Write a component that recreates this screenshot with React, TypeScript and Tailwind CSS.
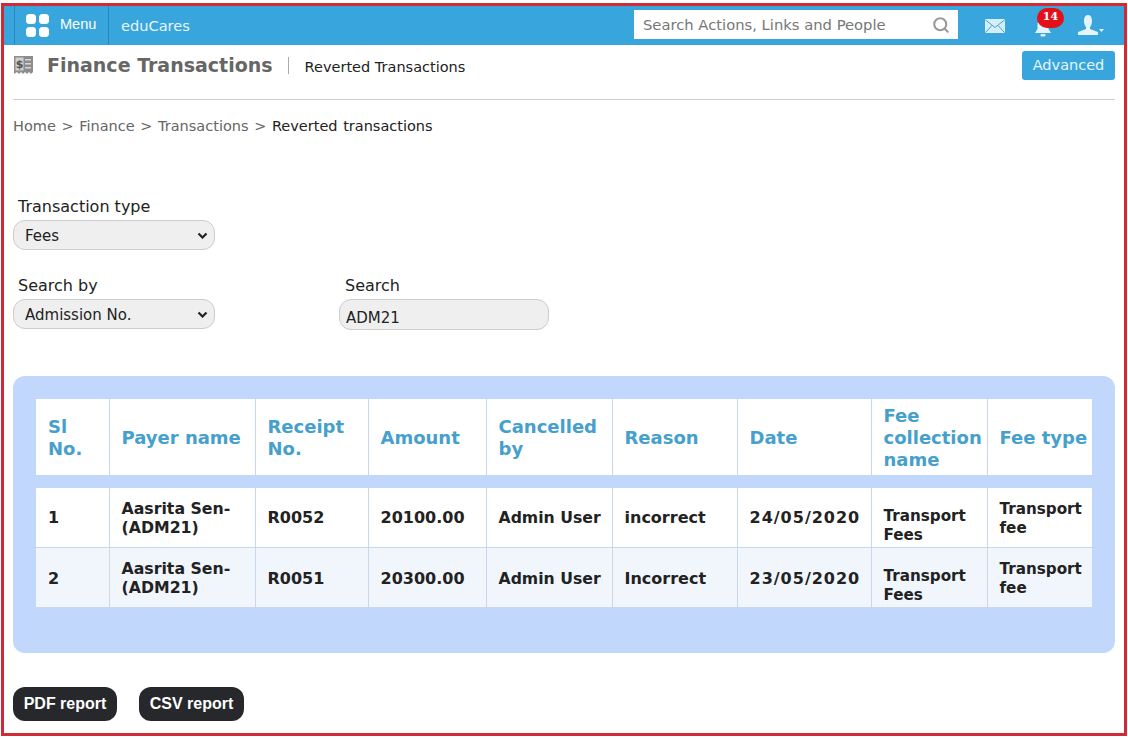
import { Search } from "lucide-react";

const FONT = "font-['DejaVu_Sans','Verdana',sans-serif]";

const rows = [
  { sl: "1", receipt: "R0052", amount: "20100.00", reason: "incorrect", date: "24/05/2020", bg: "bg-white", pad: "pt-0", padFee: "pt-[16px]", padType: "pt-[2px]" },
  { sl: "2", receipt: "R0051", amount: "20300.00", reason: "Incorrect", date: "23/05/2020", bg: "bg-[#f1f6fd]", pad: "pt-[2px]", padFee: "pt-[18px]", padType: "pt-[4px]" },
];

const headers = [
  { label: "Sl No.", width: "w-[73px]" },
  { label: "Payer name", width: "w-[146px]" },
  { label: "Receipt No.", width: "w-[113px]" },
  { label: "Amount", width: "w-[118px]" },
  { label: "Cancelled by", width: "w-[126px]" },
  { label: "Reason", width: "w-[125px]" },
  { label: "Date", width: "w-[134px]" },
  { label: "Fee collection name", width: "w-[116px]" },
  { label: "Fee type", width: "w-[105px] whitespace-nowrap" },
];

const thClass = "h-[76px] bg-white border-r border-[#c9d8e8] last:border-r-0 pl-3 pr-1 pt-[2px] text-left align-middle text-[18px] leading-[22px] font-bold text-[#46a0cc]";
const tdClass = "h-[59.5px] border-r border-b border-[#c9d8e8] last:border-r-0 pl-3 pr-1 align-middle leading-[19px] font-bold text-[#222]";

function Chevron() {
  return (
    <svg className="pointer-events-none absolute right-[7px] top-[12px]" width="11" height="7" viewBox="0 0 11 7" fill="none" aria-hidden>
      <path d="M1.5 1.5 L5.5 5.5 L9.5 1.5" stroke="#222" strokeWidth="2.2" />
    </svg>
  );
}

function TopBar() {
  return (
    <header className="flex h-[39px] items-center bg-[#38a5dc]">
      <div className="ml-[10px] flex h-full w-[95px] items-center border-x border-[#2a86b8] pl-[11px]">
        <svg width="23" height="23" viewBox="0 0 23 23" fill="#fff" aria-hidden>
          <rect x="0" y="0" width="10" height="10" rx="3.5" />
          <rect x="13" y="0" width="10" height="10" rx="3.5" />
          <rect x="0" y="13" width="10" height="10" rx="3.5" />
          <rect x="13" y="13" width="10" height="10" rx="3.5" />
        </svg>
        <span className="ml-[11px] -mt-[2px] font-['Liberation_Sans',Arial,sans-serif] text-[14.5px] text-white">Menu</span>
      </div>
      <span className="ml-[12px] text-[14.6px] text-[#e6f6ff]">eduCares</span>
      <div className="ml-auto mt-[4px] flex h-[29px] w-[324px] items-center justify-between self-start bg-white pl-[9px] pr-[8px]">
        <span className="mt-px text-[14.75px] text-[#777]">Search Actions, Links and People</span>
        <Search size={18} strokeWidth={2.75} className="text-[#999]" />
      </div>
      <svg className="ml-[27px]" width="20" height="14" viewBox="0 0 20 14" aria-hidden>
        <rect width="20" height="14" rx="1" fill="#d6eefa" />
        <path d="M0.5 1 L10 8.5 L19.5 1 M0.5 13.5 L7 6.5 M19.5 13.5 L13 6.5" fill="none" stroke="#38a5dc" strokeWidth="1" />
      </svg>
      <div className="relative ml-[29px] h-[24px] w-[30px]">
        <svg className="absolute left-0 top-[5px]" width="18" height="19" viewBox="0 0 18 19" fill="#e3f4fc" aria-hidden>
          <path d="M9 0 C5 0 3.5 3 3.5 6 V10 L1 14 H17 L14.5 10 V6 C14.5 3 13 0 9 0 Z" />
          <rect x="6.5" y="15" width="5" height="2.5" rx="1" />
        </svg>
        <span className="absolute left-[3px] -top-[6px] flex h-[20px] w-[27px] items-center justify-center rounded-full bg-[#e3101a] font-['DejaVu_Serif',serif] text-[11px] font-bold text-white">14</span>
      </div>
      <svg className="ml-[13px] mr-[20px]" width="27" height="21" viewBox="0 0 27 21" fill="#e3f4fc" aria-hidden>
        <path d="M11 0 C8 0 7 3 7 6 C7 9 8 11 9 12 V14 L1 17 V20 H21 V17 L13 14 V12 C14 11 15 9 15 6 C15 3 14 0 11 0 Z" />
        <path d="M22 14 H27 L24.5 17 Z" />
      </svg>
    </header>
  );
}

function TitleBar() {
  return (
    <div className="flex h-[55px] items-start border-b border-[#ccc] pt-[6px]">
      <svg className="ml-px mt-[5px]" width="19" height="18" viewBox="0 0 19 18" aria-hidden>
        <path d="M0 0 H19 V16 L17 18 L15 16 L13 18 L11 16 L9 18 L7 16 L5 18 L3 16 L0 18 Z" fill="#8d8d8d" />
        <rect x="1.5" y="1.5" width="8" height="13" fill="#cfcfcf" />
        <text x="5.5" y="12" textAnchor="middle" fontSize="11" fontWeight="700" fill="#555">$</text>
        <rect x="11" y="3" width="6" height="1.5" fill="#d5d5d5" />
        <rect x="11" y="7" width="6" height="1.5" fill="#d5d5d5" />
        <rect x="11" y="11" width="6" height="1.5" fill="#d5d5d5" />
      </svg>
      <h1 className="ml-[14px] text-[19px] leading-[28px] font-bold text-[#666]">Finance Transactions</h1>
      <span className="ml-[15px] mt-[6px] h-[17px] w-px bg-[#aaa]" />
      <span className="ml-[16px] mt-[6px] text-[14.5px] leading-[20px] text-[#222]">Reverted Transactions</span>
      <button className="ml-auto h-[29px] w-[93px] rounded-[3px] bg-[#38a5dc] text-[14.5px] text-[#e6f6ff]">Advanced</button>
    </div>
  );
}

function Field({ label, children, labelClass }: { label: string; children: React.ReactNode; labelClass?: string }) {
  return (
    <label className="block">
      <span className={`block h-[20px] pt-px text-[16px] leading-[20px] text-[#222] ${labelClass ?? "pl-[5px]"}`}>{label}</span>
      {children}
    </label>
  );
}

const selectClass = "block h-[30px] w-[202px] appearance-none rounded-[12px] border border-[#ccc] bg-[#efefef] pl-[11px] pt-[2px] text-[15px] text-[#222]";

function Filters() {
  return (
    <div className="mt-[60px]">
      <Field label="Transaction type">
        <div className="relative mt-[4px] w-[202px]">
          <select className={selectClass} defaultValue="Fees">
            <option>Fees</option>
          </select>
          <Chevron />
        </div>
      </Field>
      <div className="mt-[25px] flex gap-[124px]">
        <Field label="Search by">
          <div className="relative mt-[4px] w-[202px]">
            <select className={selectClass} defaultValue="Admission No.">
              <option>Admission No.</option>
            </select>
            <Chevron />
          </div>
        </Field>
        <Field label="Search" labelClass="pl-[6px]">
          <div className="mt-[4px] flex h-[31px] w-[210px] items-end rounded-[12px] border border-[#ccc] bg-[#efefef] pl-[6px] text-[15px] text-[#222]">
            ADM21
          </div>
        </Field>
      </div>
    </div>
  );
}

function ResultsTable() {
  return (
    <div className="mt-[46px] h-[277px] rounded-[12px] bg-[#c1d7fb] px-[23px] pt-[23px]">
      <table className="w-[1056px] table-fixed border-collapse">
        <thead>
          <tr>
            {headers.map((h) => (
              <th key={h.label} className={`${thClass} ${h.width}`}>{h.label}</th>
            ))}
          </tr>
          <tr>
            <td colSpan={9} className="h-[13px]" />
          </tr>
        </thead>
        <tbody>
          {rows.map((r) => (
            <tr key={r.sl} className={r.bg}>
              <td className={`${tdClass} ${r.pad} text-[16px]`}>{r.sl}</td>
              <td className={`${tdClass} ${r.pad} text-[15.75px]`}>Aasrita Sen-(ADM21)</td>
              <td className={`${tdClass} ${r.pad} text-[16px]`}>{r.receipt}</td>
              <td className={`${tdClass} ${r.pad} text-[16px]`}>{r.amount}</td>
              <td className={`${tdClass} ${r.pad} text-[15.7px]`}>Admin User</td>
              <td className={`${tdClass} ${r.pad} text-[16px]`}>{r.reason}</td>
              <td className={`${tdClass} ${r.pad} text-[16px] tracking-[1px]`}>{r.date}</td>
              <td className={`${tdClass} ${r.padFee} text-[15.2px]`}>Transport Fees</td>
              <td className={`${tdClass} ${r.padType} text-[15.2px]`}>Transport fee</td>
            </tr>
          ))}
        </tbody>
      </table>
    </div>
  );
}

export default function App() {
  return (
    <div className={`ml-px mt-[3px] h-[733px] w-[1126px] overflow-hidden border-[3px] border-[#cf2a36] bg-white ${FONT}`}>
      <TopBar />
      <main className="px-[9px]">
        <TitleBar />
        <nav className="mt-[16px] text-[14.5px] leading-[20px] text-[#666] [word-spacing:1px]">
          Home &gt; Finance &gt; Transactions &gt; <span className="text-[#222]">Reverted transactions</span>
        </nav>
        <Filters />
        <ResultsTable />
        <div className="mt-[34px] flex gap-[22px] font-['Liberation_Sans',Arial,sans-serif]">
          <button className="h-[34px] w-[104px] rounded-[12px] bg-[#26282b] text-[16px] font-bold text-white">PDF report</button>
          <button className="h-[34px] w-[105px] rounded-[12px] bg-[#26282b] text-[16px] font-bold text-white">CSV report</button>
        </div>
      </main>
    </div>
  );
}
